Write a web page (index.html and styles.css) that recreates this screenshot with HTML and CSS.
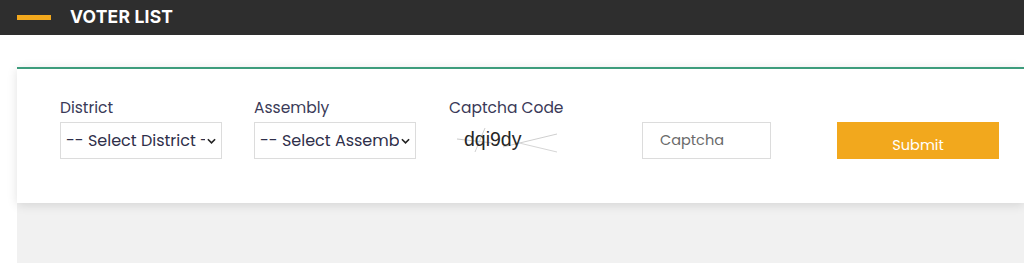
FILE: index.html
```html
<!DOCTYPE html>
<html>
<head>
<meta charset="utf-8">
<link rel="stylesheet" href="styles.css">
</head>
<body>
<header class="topbar">
  <span class="dash"></span>
  <h1 class="title">VOTER LIST</h1>
</header>
<main class="wrap">
  <section class="card">
    <form class="form-row">
      <div class="field f-district">
        <label class="lbl">District</label>
        <div class="select"><span class="sel-text">-- Select District -</span><svg class="chev" viewBox="0 0 10 6" width="9" height="6"><path d="M1 1l4 4 4-4" fill="none" stroke="#222" stroke-width="1.8"/></svg></div>
      </div>
      <div class="field f-assembly">
        <label class="lbl">Assembly</label>
        <div class="select"><span class="sel-text">-- Select Assemb</span><svg class="chev" viewBox="0 0 10 6" width="9" height="6"><path d="M1 1l4 4 4-4" fill="none" stroke="#222" stroke-width="1.8"/></svg></div>
      </div>
      <div class="field f-captcha">
        <label class="lbl">Captcha Code</label>
        <div class="captcha">
          <svg class="noise" viewBox="0 0 110 36" width="110" height="36">
            <path d="M4 17 L40 21" stroke="#c8c8c8" stroke-width="1" fill="none"/>
            <path d="M32 6 L22 30" stroke="#d0d0d0" stroke-width="1" fill="none"/>
            <path d="M50 25 L104 12" stroke="#cfcfcf" stroke-width="1" fill="none"/>
            <path d="M62 20 L104 30" stroke="#d6d6d6" stroke-width="1" fill="none"/>
          </svg>
          <span class="cap-text">dqi9dy</span>
        </div>
      </div>
      <div class="field f-input">
        <div class="input">Captcha</div>
      </div>
      <div class="field f-submit">
        <button type="button" class="btn">Submit</button>
      </div>
    </form>
  </section>
  <section class="below"></section>
</main>
</body>
</html>
```
FILE: styles.css
```css
html, body { margin: 0; padding: 0; background: #fff; }
body { font-family: "Poppins", "Inter", "Noto Sans", sans-serif; width: 1024px; height: 263px; overflow: hidden; }
.topbar { height: 35px; background: #2e2e2e; display: flex; align-items: center; }
.dash { width: 34px; height: 5px; background: #f2a81d; margin-left: 17px; margin-right: 19px; }
.title { margin: 0 0 2px 0; color: #fff; font-size: 17.5px; font-weight: 700; letter-spacing: 0.2px; font-family: "Inter", "Noto Sans", sans-serif; }
.wrap { margin-left: 17px; padding-top: 32px; }
.card { background: #fff; border-top: 2px solid #3d9c7c; height: 134px; box-shadow: 0 2px 10px rgba(0,0,0,0.12); position: relative; z-index: 1; }
.form-row { display: flex; align-items: flex-start; padding-top: 29px; padding-left: 43px; }
.field { display: flex; flex-direction: column; }
.lbl { font-size: 15.5px; color: #3a3a58; line-height: 20px; height: 20px; margin-bottom: 4px; }
.select { border: 1px solid #dcdcdc; display: flex; align-items: center; justify-content: space-between; padding: 0 5px 0 5px; box-sizing: border-box; width: 162px; height: 37px; overflow: hidden; }
.sel-text { font-size: 16px; color: #2f2f4a; white-space: nowrap; overflow: hidden; }
.chev { flex: none; margin-left: 2px; }
.f-district { margin-right: 32px; }
.f-assembly { margin-right: 33px; }
.captcha { position: relative; width: 110px; height: 36px; margin-left: 4px; }
.noise { position: absolute; left: 0; top: 0; }
.cap-text { position: absolute; left: 11px; top: 6px; font-family: "Liberation Sans", Arial, sans-serif; font-size: 19.5px; color: #262626; }
.f-captcha { width: 193px; }
.f-input { padding-top: 24px; margin-right: 66px; }
.input { width: 129px; height: 37px; border: 1px solid #dcdcdc; box-sizing: border-box; font-size: 14.5px; color: #6a6a6a; padding-left: 17px; line-height: 35px; }
.f-submit { padding-top: 24px; }
.btn { width: 162px; height: 37px; background: #f2a81d; border: none; color: #fff; font-size: 14.5px; font-family: inherit; padding: 9px 0 0 0; margin: 0; }
.below { background: #f1f1f1; height: 70px; }
```
